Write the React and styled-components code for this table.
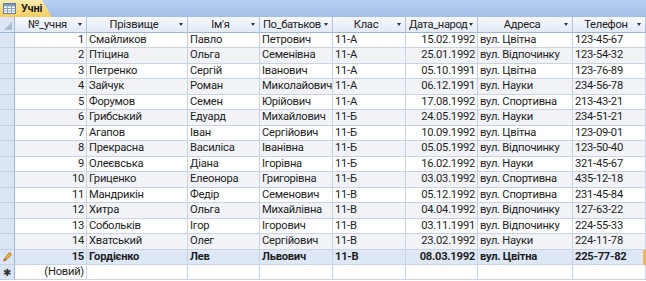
import React from "react";
import styled, { createGlobalStyle } from "styled-components";

const GlobalStyle = createGlobalStyle`
    html, body {
        margin: 0;
        padding: 0;
        background: #ffffff;
    }
    body {
        font-family: Roboto, "Liberation Sans", sans-serif;
        font-size: 11.2px;
        letter-spacing: -0.25px;
        color: #1e1e1e;
    }
`;

const COLS = "15px 72px 101px 72px 73px 73px 72px 95px 73px";

const Window = styled.div`
    width: 646px;
    height: 281px;
    display: flex;
    flex-direction: column;
    overflow: hidden;
    background: #ffffff;
`;

const TabBar = styled.div`
    height: 17px;
    flex: none;
    display: flex;
    align-items: flex-end;
    background: linear-gradient(#b7cff0, #a3bfe8);
`;

const Tab = styled.div`
    height: 17px;
    width: 52px;
    display: flex;
    align-items: center;
    gap: 5px;
    padding-left: 3px;
    box-sizing: border-box;
    font-weight: bold;
    font-size: 11px;
    color: #1b1b1b;
    background: linear-gradient(#fcebb0, #f6cc5c);
    clip-path: polygon(0 0, 42px 0, 52px 100%, 0 100%);
`;

const Grid = styled.div`
    display: flex;
    flex-direction: column;
`;

const Row = styled.div`
    display: grid;
    grid-template-columns: ${COLS};
    height: ${(p) => p.$h || "15.47px"};
    box-sizing: border-box;
    position: relative;
    background: ${(p) => (p.$current ? "#dde7f6" : p.$alt ? "#f1f3f7" : "#ffffff")};
    font-weight: ${(p) => (p.$current ? "bold" : "normal")};
`;

const HeaderRow = styled(Row)`
    background: linear-gradient(#f7f9fd, #e1e9f5);
    height: 16px;
`;

const Cell = styled.div`
    box-sizing: border-box;
    border-right: 1px solid #c8d3e6;
    border-bottom: 1px solid #c8d3e6;
    padding: 0 2px;
    line-height: 14px;
    white-space: nowrap;
    overflow: hidden;
    text-align: ${(p) => (p.$right ? "right" : "left")};
`;

const Selector = styled.div`
    box-sizing: border-box;
    border-right: 1px solid #9fb5d8;
    border-bottom: 1px solid #c3d1e8;
    background: #dbe5f4;
    display: flex;
    align-items: center;
    justify-content: center;
    font-size: 10px;
    color: #333;
`;

const Corner = styled(Selector)`
    background: #dce6f4;
    border-bottom: 1px solid #9fb5d8;
    align-items: flex-end;
    justify-content: flex-end;
    padding: 0 2px 2px 0;
`;

const HeadCell = styled.div`
    box-sizing: border-box;
    border-right: 1px solid #b3c4df;
    border-bottom: 1px solid #9fb5d8;
    display: flex;
    align-items: center;
    padding: 0 1px 0 3px;
    color: #222;
`;

const HeadLabel = styled.span`
    flex: 1;
    min-width: 0;
    white-space: nowrap;
    text-align: ${(p) => (p.$left ? "left" : "center")};
    letter-spacing: ${(p) => (p.$left ? "-0.4px" : "-0.25px")};
`;

const Arrow = styled.span`
    flex: none;
    width: 0;
    height: 0;
    margin: 0 3px 0 1px;
    border-left: 2.5px solid transparent;
    border-right: 2.5px solid transparent;
    border-top: 3px solid #333;
`;

const CurrentEdge = styled.div`
    position: absolute;
    right: 0;
    top: 0;
    bottom: 0;
    width: 3px;
    background: #f3b35c;
`;

const TableIcon = () => (
    <svg width="13" height="11" viewBox="0 0 13 11">
        <rect x="0.5" y="0.5" width="12" height="10" fill="#ffffff" stroke="#5d7ea8" />
        <rect x="1" y="1" width="11" height="2.5" fill="#7f9fca" />
        <path d="M0.5 5.5h12M0.5 8h12M4.5 3.5v7M8.5 3.5v7" stroke="#8aa4c8" strokeWidth="1" />
    </svg>
);

const Pencil = () => (
    <svg width="9" height="10" viewBox="0 0 9 10">
        <path d="M6.5 0.5l2 2-5.5 5.5-2.5 1 1-2.5z" fill="#f2b43c" stroke="#a4651a" strokeWidth="0.8" />
        <path d="M1.5 7l1.5 1.5" stroke="#5a3a10" strokeWidth="0.8" />
    </svg>
);

const SelectAll = () => (
    <svg width="8" height="8" viewBox="0 0 8 8">
        <path d="M8 0V8H0z" fill="#a7b9d3" />
    </svg>
);

const headers = [
    { label: "№_учня" },
    { label: "Прізвище" },
    { label: "Ім'я" },
    { label: "По_батьков", left: true },
    { label: "Клас" },
    { label: "Дата_народ", left: true },
    { label: "Адреса" },
    { label: "Телефон" },
];

const students = [
    ["Смайликов", "Павло", "Петрович", "11-А", "15.02.1992", "вул. Цвітна", "123-45-67"],
    ["Птіцина", "Ольга", "Семенівна", "11-А", "25.01.1992", "вул. Відпочинку", "123-54-32"],
    ["Петренко", "Сергій", "Іванович", "11-А", "05.10.1991", "вул. Цвітна", "123-76-89"],
    ["Зайчук", "Роман", "Миколайович", "11-А", "06.12.1991", "вул. Науки", "234-56-78"],
    ["Форумов", "Семен", "Юрійович", "11-А", "17.08.1992", "вул. Спортивна", "213-43-21"],
    ["Грибський", "Едуард", "Михайлович", "11-Б", "24.05.1992", "вул. Науки", "234-51-21"],
    ["Агапов", "Іван", "Сергійович", "11-Б", "10.09.1992", "вул. Цвітна", "123-09-01"],
    ["Прекрасна", "Василіса", "Іванівна", "11-Б", "05.05.1992", "вул. Відпочинку", "123-50-40"],
    ["Олеєвська", "Діана", "Ігорівна", "11-Б", "16.02.1992", "вул. Науки", "321-45-67"],
    ["Гриценко", "Елеонора", "Григорівна", "11-Б", "03.03.1992", "вул. Спортивна", "435-12-18"],
    ["Мандрикін", "Федір", "Семенович", "11-В", "05.12.1992", "вул. Спортивна", "231-45-84"],
    ["Хитра", "Ольга", "Михайлівна", "11-В", "04.04.1992", "вул. Відпочинку", "127-63-22"],
    ["Собольків", "Ігор", "Ігорович", "11-В", "03.11.1991", "вул. Відпочинку", "224-55-33"],
    ["Хватський", "Олег", "Сергійович", "11-В", "23.02.1992", "вул. Науки", "224-11-78"],
    ["Гордієнко", "Лев", "Львович", "11-В", "08.03.1992", "вул. Цвітна", "225-77-82"],
];

const App = () => {
    const current = students.length;
    return (
        <Window>
            <GlobalStyle />
            <TabBar>
                <Tab>
                    <TableIcon />
                    Учні
                </Tab>
            </TabBar>
            <Grid>
                <HeaderRow>
                    <Corner>
                        <SelectAll />
                    </Corner>
                    {headers.map((h) => (
                        <HeadCell key={h.label}>
                            <HeadLabel $left={h.left}>{h.label}</HeadLabel>
                            <Arrow />
                        </HeadCell>
                    ))}
                </HeaderRow>
                {students.map((s, i) => {
                    const n = i + 1;
                    const isCurrent = n === current;
                    return (
                        <Row key={n} $alt={n % 2 === 0} $current={isCurrent}>
                            <Selector>{isCurrent && <Pencil />}</Selector>
                            <Cell $right>{n}</Cell>
                            <Cell>{s[0]}</Cell>
                            <Cell>{s[1]}</Cell>
                            <Cell>{s[2]}</Cell>
                            <Cell>{s[3]}</Cell>
                            <Cell $right>{s[4]}</Cell>
                            <Cell>{s[5]}</Cell>
                            <Cell>{s[6]}</Cell>
                            {isCurrent && <CurrentEdge />}
                        </Row>
                    );
                })}
                <Row $h="15px">
                    <Selector>✱</Selector>
                    <Cell $right>(Новий)</Cell>
                    <Cell />
                    <Cell />
                    <Cell />
                    <Cell />
                    <Cell />
                    <Cell />
                    <Cell />
                </Row>
            </Grid>
        </Window>
    );
};

export default App;
